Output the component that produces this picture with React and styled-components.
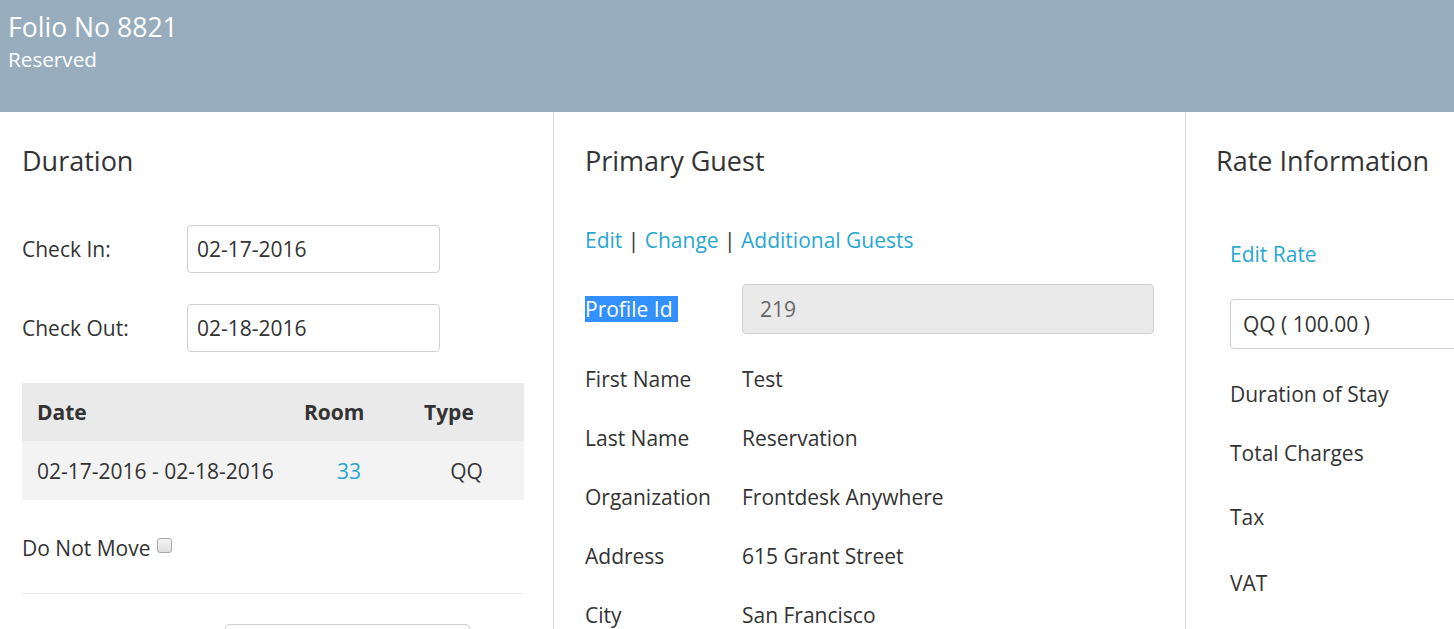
import React from 'react';
import styled, { createGlobalStyle } from 'styled-components';

const GlobalStyle = createGlobalStyle`
  html, body {
    margin: 0;
    padding: 0;
    overflow: hidden;
    background: #fff;
  }
  body {
    font-family: "Open Sans", "Liberation Sans", sans-serif;
    font-size: 21px;
    color: #333;
  }
  * { box-sizing: border-box; }
`;

const LINK = '#28a7d3';

const Header = styled.header`
  height: 112px;
  background: #97adbe;
  color: #fff;
  padding: 9px 8px 0;
`;

const FolioTitle = styled.div`
  font-size: 26.6px;
  line-height: 36px;
`;

const FolioStatus = styled.div`
  font-size: 20.7px;
  line-height: 28px;
`;

const Columns = styled.div`
  display: flex;
  width: 1900px;
`;

const Column = styled.section`
  width: ${p => p.$width}px;
  flex: none;
  border-right: 1px solid #dcdcdc;
  padding: 34px ${p => p.$right}px 0 ${p => p.$left}px;
  min-height: 540px;
`;

const Heading = styled.h4`
  margin: 0;
  font-size: 27px;
  font-weight: 400;
  line-height: 30px;
`;

const FieldRow = styled.div`
  display: flex;
  align-items: center;
  margin-top: ${p => p.$gap}px;
  margin-left: ${p => p.$indent || 0}px;
`;

const FieldLabel = styled.div`
  width: ${p => p.$width}px;
  flex: none;
  line-height: 30px;
`;

const TextBox = styled.div`
  width: ${p => p.$width}px;
  height: ${p => p.$height || 48}px;
  border: 1px solid #cfcfcf;
  border-radius: 4px;
  background: ${p => (p.$readOnly ? '#eaeaea' : '#fff')};
  color: ${p => (p.$readOnly ? '#666' : '#333')};
  display: flex;
  align-items: center;
  padding: 0 ${p => p.$pad || 9}px;
  white-space: nowrap;
  flex: none;
`;

const StayTable = styled.div`
  margin-top: 31px;
  display: grid;
  grid-template-columns: 267px 120px 115px;
`;

const HeadCell = styled.div`
  background: #eaeaea;
  height: 58px;
  display: flex;
  align-items: center;
  padding-left: 15px;
  font-weight: 700;
`;

const BodyCell = styled.div`
  background: #f3f3f3;
  height: 59px;
  display: flex;
  align-items: center;
  justify-content: ${p => (p.$center ? 'center' : 'flex-start')};
  padding: ${p => (p.$center ? '0' : '0 0 0 15px')};
  color: ${p => (p.$link ? LINK : '#333')};
`;

const CheckLine = styled.div`
  margin-top: 33px;
  line-height: 30px;
  display: flex;
  align-items: center;
`;

const CheckBox = styled.span`
  display: inline-block;
  width: 15px;
  height: 15px;
  margin: -6px 0 0 6px;
  border: 1px solid #a9a9a9;
  border-radius: 3px;
  background: linear-gradient(#f4f4f4, #dedede);
`;

const Rule = styled.hr`
  margin: 30px 0 0;
  border: 0;
  border-top: 1px solid #e6e6e6;
`;

const LinkBar = styled.div`
  margin-top: ${p => p.$gap}px;
  margin-left: ${p => p.$indent || 0}px;
  line-height: 30px;
  color: #333;
`;

const Link = styled.a`
  color: ${LINK};
  text-decoration: none;
`;

const Selected = styled.span`
  background: #3390ff;
  color: #fff;
  padding: 0 6px 0 0;
  line-height: 26px;
  display: inline-block;
`;

const InfoRow = styled.div`
  display: flex;
  align-items: center;
  height: ${p => p.$height || 59}px;
  margin-left: ${p => p.$indent || 0}px;
  white-space: nowrap;
`;

const InfoList = styled.div`
  margin-top: 15px;
`;

const guestInfo = [
  ['First Name', 'Test'],
  ['Last Name', 'Reservation'],
  ['Organization', 'Frontdesk Anywhere'],
  ['Address', '615 Grant Street'],
  ['City', 'San Francisco'],
];

const rateInfo = [
  ['Duration of Stay', 59],
  ['Total Charges', 59],
  ['Tax', 69],
  ['VAT', 63],
];

export default function App() {
  return (
    <>
      <GlobalStyle />
      <Header>
        <FolioTitle>Folio No 8821</FolioTitle>
        <FolioStatus>Reserved</FolioStatus>
      </Header>
      <Columns>
        <Column $width={554} $left={22} $right={30}>
          <Heading>Duration</Heading>
          <FieldRow $gap={49}>
            <FieldLabel $width={165}>Check In:</FieldLabel>
            <TextBox $width={253}>02-17-2016</TextBox>
          </FieldRow>
          <FieldRow $gap={31}>
            <FieldLabel $width={165}>Check Out:</FieldLabel>
            <TextBox $width={253}>02-18-2016</TextBox>
          </FieldRow>
          <StayTable>
            <HeadCell>Date</HeadCell>
            <HeadCell>Room</HeadCell>
            <HeadCell>Type</HeadCell>
            <BodyCell>02-17-2016 - 02-18-2016</BodyCell>
            <BodyCell $center $link>33</BodyCell>
            <BodyCell $center>QQ</BodyCell>
          </StayTable>
          <CheckLine>
            Do Not Move
            <CheckBox />
          </CheckLine>
          <Rule />
          <FieldRow $gap={30}>
            <FieldLabel $width={203} />
            <TextBox $width={245} />
          </FieldRow>
        </Column>

        <Column $width={632} $left={31} $right={31}>
          <Heading>Primary Guest</Heading>
          <LinkBar $gap={49}>
            <Link>Edit</Link> | <Link>Change</Link> | <Link>Additional Guests</Link>
          </LinkBar>
          <FieldRow $gap={29}>
            <FieldLabel $width={157}>
              <Selected>Profile Id</Selected>
            </FieldLabel>
            <TextBox $width={412} $height={50} $readOnly $pad={17}>219</TextBox>
          </FieldRow>
          <InfoList>
            {guestInfo.map(([label, value]) => (
              <InfoRow key={label}>
                <FieldLabel $width={157}>{label}</FieldLabel>
                <span>{value}</span>
              </InfoRow>
            ))}
          </InfoList>
        </Column>

        <Column $width={640} $left={30} $right={30}>
          <Heading>Rate Information</Heading>
          <LinkBar $gap={63} $indent={14}>
            <Link>Edit Rate</Link>
          </LinkBar>
          <FieldRow $gap={30} $indent={14}>
            <TextBox $width={400} $height={50} $pad={12}>QQ ( 100.00 )</TextBox>
          </FieldRow>
          <InfoList>
            {rateInfo.map(([label, h]) => (
              <InfoRow key={label} $height={h} $indent={14}>
                {label}
              </InfoRow>
            ))}
          </InfoList>
        </Column>
      </Columns>
    </>
  );
}
